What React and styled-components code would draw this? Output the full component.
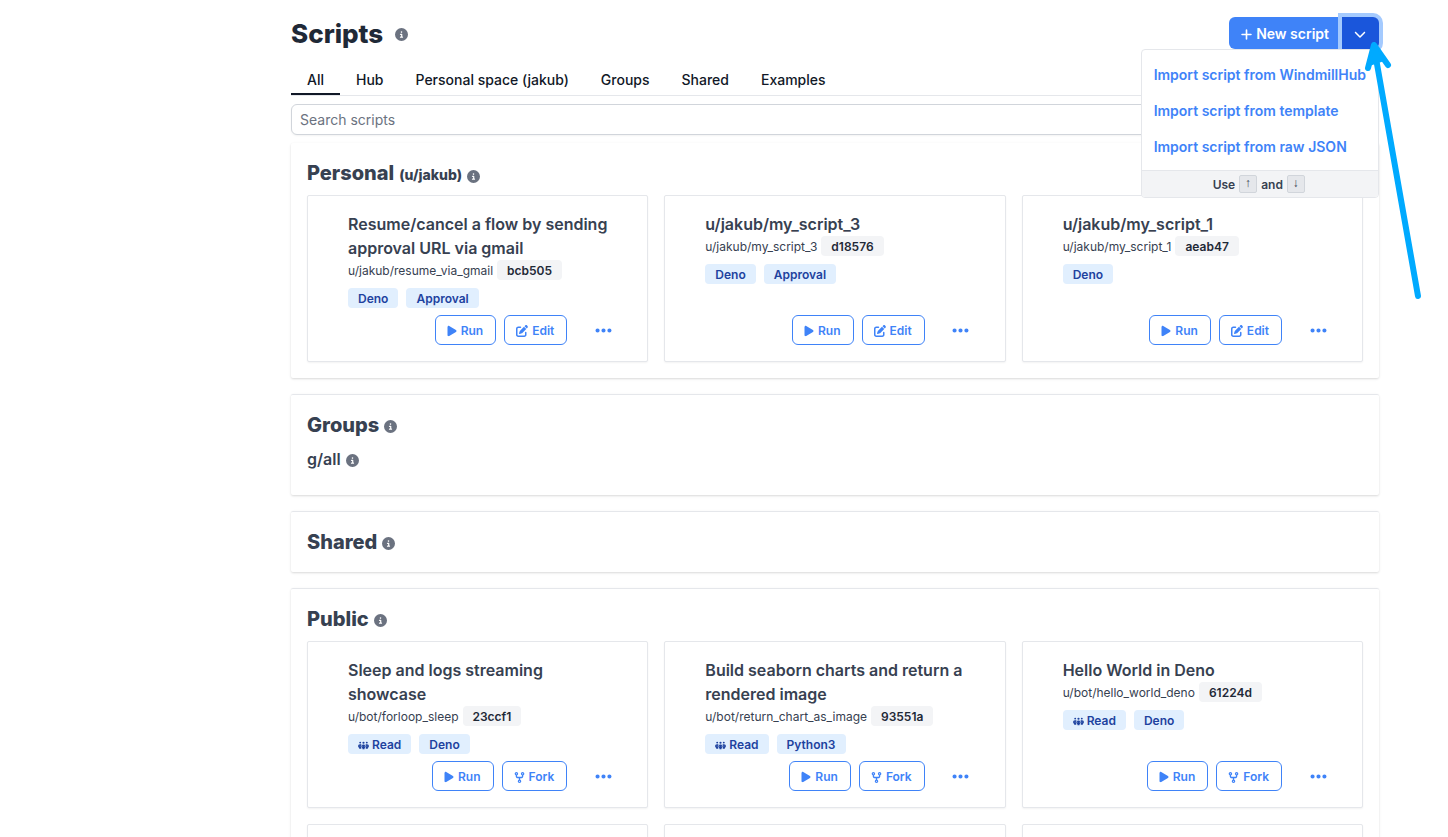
import React from "react";
import styled, { createGlobalStyle, css } from "styled-components";
import {
  FaCircleInfo,
  FaPlus,
  FaChevronDown,
  FaPlay,
  FaPenToSquare,
  FaCodeFork,
  FaEllipsis,
  FaPeopleGroup,
} from "react-icons/fa6";

const GlobalStyle = createGlobalStyle`
  *, *::before, *::after { box-sizing: border-box; }
  body {
    margin: 0;
    background: #fff;
    color: #374151;
    font-family: Inter, "Liberation Sans", sans-serif;
    font-size: 14px;
    line-height: 20px;
  }
  h1, h2, h3, h4, p { margin: 0; }
  button, input { font: inherit; }
`;

const Shell = styled.div`
  display: grid;
  grid-template-columns: 222px minmax(0, 1fr);
  height: 100vh;
`;

const Sidebar = styled.aside`
  min-width: 0;
`;

const Scroller = styled.main`
  overflow-y: auto;
  scrollbar-width: none;
`;

const Content = styled.div`
  max-width: 1152px;
  margin: 0 auto;
  padding: 17px 32px;
`;

const Header = styled.header`
  display: flex;
  align-items: center;
  justify-content: space-between;
  height: 32px;
`;

const PageTitle = styled.h1`
  display: flex;
  align-items: center;
  gap: 12px;
  padding-top: 2px;
  font-size: 26px;
  line-height: 32px;
  font-weight: 800;
  color: #1f2937;
`;

const InfoIcon = styled(FaCircleInfo)`
  flex: none;
  width: 13px;
  height: 13px;
  color: #6b7280;
`;

const SplitButton = styled.div`
  position: relative;
  display: flex;
`;

const NewButton = styled.button`
  display: flex;
  align-items: center;
  gap: 3px;
  height: 32px;
  padding: 2px 13px 0 11px;
  border: 0;
  border-radius: 6px 0 0 6px;
  background: #3f83f8;
  color: #fff;
  font-weight: 600;
`;

const ToggleButton = styled.button`
  display: flex;
  align-items: center;
  justify-content: center;
  width: 37px;
  height: 32px;
  padding: 2px 1px 0 0;
  border: 0;
  border-radius: 0 6px 6px 0;
  background: #1a56db;
  color: #fff;
  box-shadow: 0 0 0 4px #a4cafe;
`;

const Menu = styled.div`
  position: absolute;
  top: 100%;
  right: 0;
  z-index: 2;
  overflow: hidden;
  border: 1px solid #e5e7eb;
  border-radius: 4px;
  background: #fff;
  white-space: nowrap;
`;

const MenuItems = styled.div`
  display: flex;
  flex-direction: column;
  padding: 7px 0 5px;
`;

const MenuItem = styled.a`
  padding: 8px 12px;
  color: #3f83f8;
  font-weight: 600;
  text-decoration: none;
`;

const MenuHint = styled.div`
  display: flex;
  align-items: center;
  justify-content: center;
  gap: 4px;
  height: 27px;
  padding-right: 2px;
  border-top: 1px solid #e5e7eb;
  background: #f3f4f6;
  font-size: 12px;
  line-height: 18px;
  font-weight: 600;
`;

const HintText = styled.span`
  padding-top: 2px;
`;

const Key = styled.kbd`
  display: flex;
  align-items: center;
  justify-content: center;
  width: 18px;
  height: 18px;
  border: 1px solid #d1d5db;
  border-radius: 2px;
  background: #e5e7eb;
  font-family: "Liberation Mono", monospace;
  font-size: 12px;
  line-height: 16px;
  font-weight: 400;
`;

const Arrow = styled.svg`
  position: absolute;
  top: 20px;
  right: -44px;
  z-index: 3;
  width: 64px;
  height: 264px;
  fill: none;
  stroke: #00aaff;
  stroke-width: 6;
  stroke-linecap: round;
  stroke-linejoin: round;
  pointer-events: none;
`;

const Tabs = styled.nav`
  display: flex;
  margin-top: 16px;
  border-bottom: 1px solid #e5e7eb;
`;

const Tab = styled.button`
  padding: 5px 16px 3px;
  border: 0;
  border-bottom: 2px solid ${(p) => (p.$active ? "#111827" : "transparent")};
  background: none;
  color: #111827;
  font-weight: 500;
`;

const Search = styled.input`
  display: block;
  width: 100%;
  height: 31px;
  margin: 8px 0;
  padding: 0 8px;
  border: 1px solid #d1d5db;
  border-radius: 6px;
  background: #fff;
  color: #374151;
  box-shadow: 0 1px 2px rgba(0, 0, 0, 0.05);
  &::placeholder {
    color: #6b7280;
    opacity: 1;
  }
`;

const Sections = styled.div`
  display: flex;
  flex-direction: column;
  gap: 16px;
`;

const Section = styled.section`
  padding: 16px;
  border-radius: 2px;
  box-shadow: 0 1px 3px rgba(0, 0, 0, 0.1), 0 1px 2px rgba(0, 0, 0, 0.06);
  & + & {
    border-top: 1px solid #e5e7eb;
  }
`;

const Owner = styled.span`
  font-size: 14px;
  line-height: 20px;
  font-weight: 800;
`;

const heading = css`
  display: flex;
  align-items: baseline;
  color: #374151;
  ${InfoIcon} {
    align-self: center;
    margin-top: 2px;
  }
  ${Owner} + ${InfoIcon} {
    margin-top: 6px;
  }
`;

const SectionTitle = styled.h2`
  ${heading}
  gap: 5px;
  font-size: 20px;
  line-height: 28px;
  font-weight: 800;
`;

const GroupTitle = styled.h3`
  ${heading}
  gap: 5px;
  margin: 8px 0;
  font-size: 16px;
  line-height: 24px;
  font-weight: 600;
`;

const CardGrid = styled.div`
  display: grid;
  grid-template-columns: repeat(3, minmax(0, 1fr));
  grid-auto-rows: minmax(167px, auto);
  gap: 16px;
  margin-top: 8px;
`;

const Card = styled.article`
  display: flex;
  flex-direction: column;
  padding: 16px;
  border: 1px solid #e5e7eb;
  border-radius: 2px;
  background: #fff;
  box-shadow: 0 1px 2px rgba(0, 0, 0, 0.05);
`;

const CardBody = styled.div`
  padding: 0 16px 0 24px;
`;

const CardTitle = styled.h4`
  font-size: 16px;
  line-height: 24px;
  font-weight: 600;
`;

const PathLine = styled.div`
  display: flex;
  align-items: center;
  gap: 4px;
  font-size: 12px;
  line-height: 18px;
`;

const Path = styled.span`
  padding-top: 2px;
`;

const Badges = styled.div`
  display: flex;
  gap: 8px;
  margin-top: 8px;
`;

const Badge = styled.span`
  display: inline-flex;
  align-items: center;
  gap: 3px;
  padding: 2px 10px 0;
  border-radius: 4px;
  background: ${(p) => (p.$gray ? "#f3f4f6" : "#e1effe")};
  color: ${(p) => (p.$gray ? "#1f2937" : "#1e429f")};
  font-size: 12px;
  line-height: 18px;
  font-weight: 600;
`;

const Actions = styled.div`
  display: flex;
  justify-content: flex-end;
  gap: 8px;
  margin-top: auto;
`;

const ActionButton = styled.button`
  display: flex;
  align-items: center;
  gap: 4px;
  height: 30px;
  padding: 2px 12px 0 11px;
  border: 1px solid #3f83f8;
  border-radius: 6px;
  background: #fff;
  color: #3f83f8;
  font-size: 12px;
  font-weight: 600;
`;

const MoreButton = styled.button`
  display: flex;
  align-items: center;
  justify-content: center;
  width: 56px;
  height: 30px;
  padding: 0;
  border: 0;
  background: none;
  color: #3f83f8;
`;

const PlayIcon = styled(FaPlay)`
  width: 10px;
  height: 12px;
`;

const tabs = ["All", "Hub", "Personal space (jakub)", "Groups", "Shared", "Examples"];

const imports = [
  "Import script from WindmillHub",
  "Import script from template",
  "Import script from raw JSON",
];

const personal = [
  {
    title: "Resume/cancel a flow by sending approval URL via gmail",
    path: "u/jakub/resume_via_gmail",
    hash: "bcb505",
    badges: ["Deno", "Approval"],
  },
  { title: "u/jakub/my_script_3", path: "u/jakub/my_script_3", hash: "d18576", badges: ["Deno", "Approval"] },
  { title: "u/jakub/my_script_1", path: "u/jakub/my_script_1", hash: "aeab47", badges: ["Deno"] },
];

const shared = [
  { title: "Sleep and logs streaming showcase", path: "u/bot/forloop_sleep", hash: "23ccf1", badges: ["Deno"] },
  {
    title: "Build seaborn charts and return a rendered image",
    path: "u/bot/return_chart_as_image",
    hash: "93551a",
    badges: ["Python3"],
  },
  { title: "Hello World in Deno", path: "u/bot/hello_world_deno", hash: "61224d", badges: ["Deno"] },
];

function ScriptCard({ script, readOnly }) {
  return (
    <Card>
      <CardBody>
        <CardTitle>{script.title}</CardTitle>
        <PathLine>
          <Path>{script.path}</Path>
          <Badge $gray>{script.hash}</Badge>
        </PathLine>
        <Badges>
          {readOnly && (
            <Badge>
              <FaPeopleGroup size={11} />
              Read
            </Badge>
          )}
          {script.badges.map((b) => (
            <Badge key={b}>{b}</Badge>
          ))}
        </Badges>
      </CardBody>
      <Actions>
        <ActionButton type="button">
          <PlayIcon />
          Run
        </ActionButton>
        <ActionButton type="button">
          {readOnly ? <FaCodeFork size={11} /> : <FaPenToSquare size={12} />}
          {readOnly ? "Fork" : "Edit"}
        </ActionButton>
        <MoreButton type="button" aria-label="More actions">
          <FaEllipsis size={19} />
        </MoreButton>
      </Actions>
    </Card>
  );
}

export default function App() {
  return (
    <Shell>
      <GlobalStyle />
      <Sidebar />
      <Scroller>
        <Content>
          <Header>
            <PageTitle>
              Scripts <InfoIcon />
            </PageTitle>
            <SplitButton>
              <NewButton type="button">
                <FaPlus size={13} />
                New script
              </NewButton>
              <ToggleButton type="button" aria-label="Import options" aria-expanded="true">
                <FaChevronDown size={12} />
              </ToggleButton>
              <Menu>
                <MenuItems>
                  {imports.map((label) => (
                    <MenuItem key={label} href="#">
                      {label}
                    </MenuItem>
                  ))}
                </MenuItems>
                <MenuHint>
                  <HintText>Use</HintText>
                  <Key>↑</Key>
                  <HintText>and</HintText>
                  <Key>↓</Key>
                </MenuHint>
              </Menu>
              <Arrow viewBox="0 0 64 264" aria-hidden="true">
                <path d="M59 259 15 10" />
                <path d="M9 31 15 8 29 28" />
                <path d="M10 28 15 9 25 23Z" fill="#00aaff" strokeWidth="2" />
              </Arrow>
            </SplitButton>
          </Header>

          <Tabs>
            {tabs.map((t, i) => (
              <Tab key={t} type="button" $active={i === 0}>
                {t}
              </Tab>
            ))}
          </Tabs>

          <Search type="text" placeholder="Search scripts" aria-label="Search scripts" />

          <Sections>
            <Section>
              <SectionTitle>
                Personal <Owner>(u/jakub)</Owner> <InfoIcon />
              </SectionTitle>
              <CardGrid>
                {personal.map((s) => (
                  <ScriptCard key={s.hash} script={s} />
                ))}
              </CardGrid>
            </Section>
            <Section>
              <SectionTitle>
                Groups <InfoIcon />
              </SectionTitle>
              <GroupTitle>
                g/all <InfoIcon />
              </GroupTitle>
            </Section>
            <Section>
              <SectionTitle>
                Shared <InfoIcon />
              </SectionTitle>
            </Section>
            <Section>
              <SectionTitle>
                Public <InfoIcon />
              </SectionTitle>
              <CardGrid>
                {shared.map((s) => (
                  <ScriptCard key={s.hash} script={s} readOnly />
                ))}
                <Card />
                <Card />
                <Card />
              </CardGrid>
            </Section>
          </Sections>
        </Content>
      </Scroller>
    </Shell>
  );
}
